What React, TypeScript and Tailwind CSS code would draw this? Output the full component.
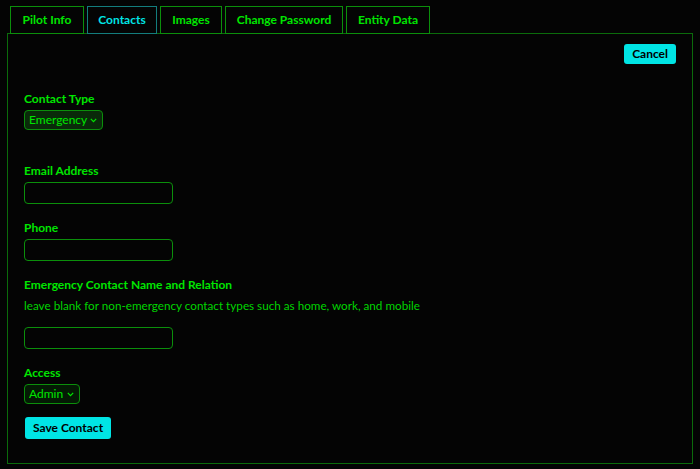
import React from 'react';

const tabs = [
  { label: 'Pilot Info', w: 'w-[74px]' },
  { label: 'Contacts', w: 'w-[70px]' },
  { label: 'Images', w: 'w-[62px]' },
  { label: 'Change Password', w: 'w-[118px]' },
  { label: 'Entity Data', w: 'w-[84px]' },
];

const Label: React.FC<{ children: React.ReactNode }> = ({ children }) => (
  <label className="block text-[12px] font-bold leading-[16px] text-[#00e600]">{children}</label>
);

const TextInput = () => (
  <input
    type="text"
    className="mt-[3px] block h-[22px] w-[149px] rounded-[4px] border border-[#0b8f0b] bg-transparent px-2 text-[12px] text-[#00e600] outline-none"
  />
);

const Select: React.FC<{ value: string; w: string; bg: string }> = ({ value, w, bg }) => (
  <div className={`relative mt-[3px] ${w}`}>
    <select className={`block h-[20px] w-full appearance-none rounded-[4px] border border-[#0b8f0b] ${bg} pl-[4px] pr-[14px] text-[12px] text-[#00e600] outline-none`}>
      <option>{value}</option>
    </select>
    <svg className="pointer-events-none absolute right-[6px] top-[8px]" width="7" height="5" viewBox="0 0 7 5" fill="none">
      <path d="M0.8 0.8 L3.5 3.6 L6.2 0.8" stroke="#00e600" strokeWidth="1.2" />
    </svg>
  </div>
);

export default function App() {
  return (
    <div className="min-h-[469px] bg-[#040404] px-[7px] pt-[6px] text-[#00e600]" style={{ fontFamily: 'Lato, "Noto Sans", sans-serif' }}>
      <div className="flex gap-[3px] pl-[3px]">
        {tabs.map((t) => {
          const active = t.label === 'Contacts';
          return (
            <div
              key={t.label}
              className={`relative -mb-px flex h-[28px] items-center justify-center border text-[12px] font-bold ${t.w} ${
                active ? 'border-[#137d7d] text-[#00e5e5]' : 'border-[#0b8f0b] text-[#00e600]'
              }`}
            >
              {t.label}
            </div>
          );
        })}
      </div>
      <div className="h-[431px] border border-[#0b6b0b] px-[16px] pt-[10px]">
        <div className="flex justify-end">
          <button className="h-[20px] rounded-[3px] bg-[#00e5e5] px-[8px] text-[12px] font-bold text-black">Cancel</button>
        </div>
        <div className="mt-[27px]">
          <Label>Contact Type</Label>
          <Select value="Emergency" w="w-[79px]" bg="bg-[#0a2a0a]" />
        </div>
        <div className="mt-[33px]">
          <Label>Email Address</Label>
          <TextInput />
        </div>
        <div className="mt-[16px]">
          <Label>Phone</Label>
          <TextInput />
        </div>
        <div className="mt-[16px]">
          <Label>Emergency Contact Name and Relation</Label>
          <p className="mt-[4px] text-[11.7px] leading-[16px] text-[#00d400]">
            leave blank for non-emergency contact types such as home, work, and mobile
          </p>
          <div className="mt-[14px]">
            <TextInput />
          </div>
        </div>
        <div className="mt-[16px]">
          <Label>Access</Label>
          <Select value="Admin" w="w-[56px]" bg="bg-[#041a04]" />
        </div>
        <button className="mt-[13px] ml-px h-[22px] rounded-[3px] bg-[#00e5e5] px-[8px] text-[12px] font-bold text-black">
          Save Contact
        </button>
      </div>
    </div>
  );
}
